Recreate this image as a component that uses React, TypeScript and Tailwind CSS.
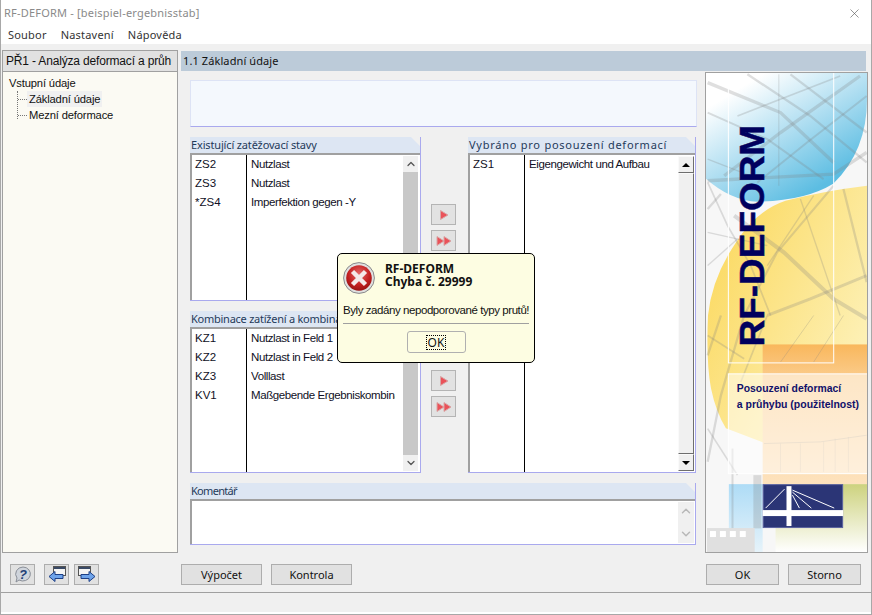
import { ChevronDown, ChevronUp, X } from "lucide-react";

type Row = { id: string; name: string };

const existing: Row[] = [
  { id: "ZS2", name: "Nutzlast" },
  { id: "ZS3", name: "Nutzlast" },
  { id: "*ZS4", name: "Imperfektion gegen -Y" },
];

const combos: Row[] = [
  { id: "KZ1", name: "Nutzlast in Feld 1" },
  { id: "KZ2", name: "Nutzlast in Feld 2" },
  { id: "KZ3", name: "Volllast" },
  { id: "KV1", name: "Maßgebende Ergebniskombination" },
];

const selected: Row[] = [{ id: "ZS1", name: "Eigengewicht und Aufbau" }];

// Group header with the cut corner
function GroupTitle({ title, spacing }: { title: string; spacing: string }) {
  return (
    <div
      className={`h-[16px] bg-[#dde6f3] pl-[1px] font-['Noto_Sans',sans-serif] text-[11px] leading-[16px] whitespace-nowrap text-[#1f3a5a] [clip-path:polygon(0_0,calc(100%-9px)_0,100%_9px,100%_100%,0_100%)] ${spacing}`}
    >
      {title}
    </div>
  );
}

function ListBox({
  title,
  spacing,
  rows,
  height,
  classic,
}: {
  title: string;
  spacing: string;
  rows: Row[];
  height: string;
  classic?: boolean;
}) {
  return (
    <div className="flex flex-col border-r border-b border-[#a9a9ee]">
      <GroupTitle title={title} spacing={spacing} />
      <div
        className={`flex ${height} border-t-2 border-l-2 border-[#a0a0a0] bg-white text-[11.5px] tracking-[-0.4px] text-[#101025]`}
      >
        <div className="w-[55px] shrink-0 border-r border-black pl-[3px] tracking-normal">
          {rows.map((r) => (
            <div key={r.id} className="h-[19px] leading-[19px]">
              {r.id}
            </div>
          ))}
        </div>
        <div className="min-w-0 flex-1 overflow-hidden pl-[4px]">
          {rows.map((r) => (
            <div key={r.id} className="h-[19px] overflow-hidden leading-[19px] whitespace-nowrap">
              {r.name}
            </div>
          ))}
        </div>
        {classic ? <ClassicScroll /> : <FlatScroll />}
      </div>
    </div>
  );
}

function FlatScroll() {
  return (
    <div className="my-[1px] mr-[2px] ml-[8px] flex w-[15px] shrink-0 flex-col bg-[#c8c8c8]">
      <div className="flex h-[16px] items-center justify-center bg-[#f0f0f0] text-[#555]">
        <ChevronUp size={12} strokeWidth={2.5} />
      </div>
      <div className="flex-1" />
      <div className="flex h-[16px] items-center justify-center bg-[#f0f0f0] text-[#555]">
        <ChevronDown size={12} strokeWidth={2.5} />
      </div>
    </div>
  );
}

function ClassicScroll() {
  const btn =
    "border border-[#fafafa] border-r-[#6e6e6e] border-b-[#6e6e6e] bg-[#f0f0f0]";
  return (
    <div className="my-[1px] mr-[1px] flex w-[16px] shrink-0 flex-col bg-[#f0f0f0]">
      <div className={`flex h-[17px] items-center justify-center ${btn}`}>
        <div className="h-0 w-0 border-x-[4px] border-b-[4px] border-x-transparent border-b-black" />
      </div>
      <div className={`flex-1 ${btn}`} />
      <div className={`flex h-[17px] items-center justify-center ${btn}`}>
        <div className="h-0 w-0 border-x-[4px] border-t-[4px] border-x-transparent border-t-black" />
      </div>
    </div>
  );
}

function ArrowBtn({ double }: { double?: boolean }) {
  return (
    <button className="flex h-[21px] w-[25px] items-center justify-center border border-[#b4b4b4] bg-[#e2e2e2]">
      <svg width="20" height="12" viewBox="0 0 20 12">
        {double ? (
          <>
            <path d="M3 1.5 L10 6 L3 10.5 Z" fill="#ea5259" stroke="#d9a6a6" />
            <path d="M10 1.5 L17 6 L10 10.5 Z" fill="#ea5259" stroke="#d9a6a6" />
          </>
        ) : (
          <path d="M6.5 1.5 L14 6 L6.5 10.5 Z" fill="#ea5259" stroke="#d9a6a6" />
        )}
      </svg>
    </button>
  );
}

function GrayBtn({ label, className }: { label: string; className: string }) {
  return (
    <button
      className={`h-[21px] border border-[#adadad] bg-[#e1e1e1] font-['Noto_Sans',sans-serif] text-[11px] leading-[19px] text-[#111] ${className}`}
    >
      {label}
    </button>
  );
}

function ToolBtn({ children, className }: { children: React.ReactNode; className?: string }) {
  return (
    <button
      className={`flex h-[21px] w-[25px] items-center justify-center border border-[#adadad] bg-[#e1e1e1] ${className ?? ""}`}
    >
      {children}
    </button>
  );
}

function NavIcon({ right }: { right?: boolean }) {
  return (
    <svg width="20" height="17" viewBox="0 0 20 17">
      <rect x={right ? 1.5 : 6.5} y="0.5" width="12" height="9" fill="#f4f4f4" stroke="#555" />
      <rect x={right ? 2 : 7} y="1" width="11" height="2" fill="#3a4a66" />
      {right ? (
        <path d="M4 8.5 H12 V5.5 L18 10.5 L12 15.5 V12.5 H4 Z" fill="#6ea3ea" stroke="#1d3f86" />
      ) : (
        <path d="M16 8.5 H8 V5.5 L2 10.5 L8 15.5 V12.5 H16 Z" fill="#6ea3ea" stroke="#1d3f86" />
      )}
    </svg>
  );
}

// The picture at the right of the window, origin at its top left corner
function SidePicture() {
  return (
    <svg
      className="block h-full w-full"
      viewBox="0 0 162 480"
      preserveAspectRatio="none"
      fontFamily="'Liberation Sans', sans-serif"
    >
      <defs>
        <linearGradient id="blue" x1="0.1" y1="0" x2="0.75" y2="0.85">
          <stop offset="0.15" stopColor="#ffffff" />
          <stop offset="0.55" stopColor="#b4e0f2" />
          <stop offset="1" stopColor="#5cbde2" />
        </linearGradient>
        <linearGradient id="yellow" x1="0.1" y1="0.1" x2="0.9" y2="0.7">
          <stop offset="0" stopColor="#fbd960" />
          <stop offset="1" stopColor="#fdf0b4" />
        </linearGradient>
        <linearGradient id="orange" x1="0" y1="0" x2="0" y2="1">
          <stop offset="0" stopColor="#f9b75c" />
          <stop offset="0.25" stopColor="#fbcd8e" />
          <stop offset="1" stopColor="#fde2bd" />
        </linearGradient>
        <linearGradient id="green" x1="0" y1="0" x2="0" y2="1">
          <stop offset="0" stopColor="#cdd27e" />
          <stop offset="1" stopColor="#ffffff" />
        </linearGradient>
        <linearGradient id="sky" x1="0" y1="0" x2="0" y2="1">
          <stop offset="0" stopColor="#aedcf6" />
          <stop offset="1" stopColor="#e6f3fa" />
        </linearGradient>
      </defs>
      <rect width="162" height="480" fill="#f7f7f7" />
      <path d="M0 106 Q25 128 52 129 Q100 128 128 111 Q162 78 162 26 L162 0 L0 0 Z" fill="url(#blue)" />
      <path
        d="M162 113 Q120 118 80 128 Q50 138 30 170 Q6 205 2 243 Q0 290 5 316 Q10 340 20 356 L57 370 L162 370 Z"
        fill="url(#yellow)"
      />
      <rect x="57" y="272" width="105" height="140" fill="url(#orange)" />
      <rect x="70" y="412" width="92" height="68" fill="url(#green)" />
      <rect x="23" y="412" width="34" height="68" fill="url(#sky)" />

      {/* roof structure, upper part */}
      <g transform="translate(-5 -7) scale(0.3333)" stroke="#7f7f7f" strokeOpacity="0.25" fill="none">
        <path d="M20 50 L240 140 L400 290" strokeWidth="10" />
        <path d="M140 25 L330 150 L500 290" strokeWidth="7" />
        <path d="M270 25 L500 200" strokeWidth="7" />
        <path d="M20 140 L200 220 L370 340" strokeWidth="6" />
        <path d="M20 280 L150 330" strokeWidth="4" />
        <path d="M480 30 L240 200 L70 330" strokeWidth="10" />
        <path d="M420 30 L110 150" strokeWidth="5" />
        <path d="M500 90 L320 230 L170 350" strokeWidth="6" />
        <path d="M20 345 L400 325 L500 260" strokeWidth="10" />
        <path d="M235 25 L235 360" strokeWidth="3" />
        <path d="M20 350 L80 480 L150 600 L210 750" strokeWidth="5" />
        <path d="M100 450 L250 560 L400 700 L500 760" strokeWidth="12" />
        <path d="M20 500 L200 540" strokeWidth="4" />
        <path d="M400 360 L230 560 L130 750" strokeWidth="6" />
        <path d="M340 390 L200 600" strokeWidth="4" />
        <path d="M430 370 L500 650" strokeWidth="7" />
        <path d="M500 630 L330 700 L200 750" strokeWidth="9" />
        <path d="M20 430 L60 385" strokeWidth="7" />
        <path d="M300 400 L420 750" strokeWidth="4" />
        <path d="M20 600 L110 520" strokeWidth="4" />
      </g>
      {/* roof structure, lower part */}
      <g transform="translate(-5 243) scale(0.3333)" stroke="#7f7f7f" strokeOpacity="0.25" fill="none">
        <path d="M60 0 L20 120" strokeWidth="7" />
        <path d="M130 0 L60 240 L20 440" strokeWidth="7" />
        <path d="M200 0 L120 200" strokeWidth="5" />
        <path d="M20 60 L130 130" strokeWidth="5" />
        <path d="M340 0 L240 140 M430 0 L340 140" strokeWidth="3" />
        <path d="M20 340 L110 480" strokeWidth="5" />
        <path d="M95 400 L95 650" strokeWidth="6" />
        <path d="M170 480 L170 640" strokeWidth="24" />
        <path d="M360 380 L500 360 M190 385 L360 380" strokeWidth="3" />
        <path d="M370 380 L370 470 M405 370 L405 470 M445 365 L445 470 M300 385 L300 470 M240 385 L240 470" strokeWidth="2" />
      </g>
      <rect x="1" y="456" width="48" height="24" fill="#e0e0e0" />
      <g fill="#ffffff">
        <rect x="4" y="459" width="6" height="6" />
        <rect x="14" y="459" width="6" height="6" />
        <rect x="24" y="459" width="6" height="6" />
        <rect x="34" y="459" width="6" height="6" />
      </g>

      {/* white frames */}
      <rect x="22.5" y="-2" width="106" height="292.5" fill="none" stroke="#fff" strokeWidth="1" />
      <rect x="22.5" y="301.5" width="150" height="100" fill="#fff" fillOpacity="0.5" stroke="#fff" strokeWidth="1" />

      <text
        transform="translate(58 274) rotate(-90)"
        fontSize="36"
        fontWeight="700"
        fill="#00005e"
        stroke="#00005e"
        strokeWidth="0.5"
        textLength="222"
        lengthAdjust="spacingAndGlyphs"
      >
        RF-DEFORM
      </text>
      <text x="31" y="320" fontSize="11" fontWeight="700" fill="#10106a" textLength="105" lengthAdjust="spacingAndGlyphs">
        Posouzení deformací
      </text>
      <text x="31" y="336" fontSize="11" fontWeight="700" fill="#10106a" textLength="123" lengthAdjust="spacingAndGlyphs">
        a průhybu (použitelnost)
      </text>

      {/* logo */}
      <rect x="57.5" y="412.5" width="80" height="43" fill="#2b3576" stroke="#5a62a0" />
      <rect x="81" y="414" width="5" height="40" fill="#fff" />
      <rect x="57" y="438" width="81" height="6" fill="#fff" />
      <path
        d="M60 436 L79 417 M87 418 L129 436 M87 420 L106 436 M87 423 L94 436"
        stroke="#fff"
        strokeWidth="1"
        fill="none"
      />
    </svg>
  );
}

function ErrorIcon() {
  return (
    <svg width="32" height="32" viewBox="0 0 32 32">
      <defs>
        <radialGradient id="err" cx="0.5" cy="0.35" r="0.7">
          <stop offset="0" stopColor="#e66a6a" />
          <stop offset="0.6" stopColor="#c32020" />
          <stop offset="1" stopColor="#8f1010" />
        </radialGradient>
      </defs>
      <circle cx="16" cy="16" r="15.4" fill="#e0e0e0" stroke="#8a8a8a" />
      <circle cx="16" cy="16" r="12.8" fill="url(#err)" />
      <path d="M9.5 9.5 L22.5 22.5 M22.5 9.5 L9.5 22.5" stroke="#f4eaea" strokeWidth="4.5" />
    </svg>
  );
}

function ErrorDialog() {
  return (
    <div className="absolute top-[253px] left-[336px] flex h-[110px] w-[198px] flex-col rounded-[5px] border border-black bg-[#fdfde2] px-[5px] text-[11.5px] text-[#111]">
      <div className="flex h-[43px] items-start pt-[8px]">
        <ErrorIcon />
        <div className="ml-[10px] font-['Noto_Sans',sans-serif] text-[12px] leading-[13px] font-bold">
          <div>RF-DEFORM</div>
          <div>Chyba č. 29999</div>
        </div>
      </div>
      <div className="mt-[5px] leading-[16px] tracking-[-0.43px] whitespace-nowrap">
        Byly zadány nepodporované typy prutů!
      </div>
      <div className="mt-[5px] border-t border-[#a0a0a0]" />
      <div className="flex justify-center pt-[7px]">
        <button className="flex h-[22px] w-[59px] items-center justify-center rounded-[3px] border border-[#b0b0b0]">
          <span className="border border-dotted border-black px-[1px] font-['Noto_Sans',sans-serif] text-[12px] leading-[13px]">
            OK
          </span>
        </button>
      </div>
    </div>
  );
}

export default function App() {
  return (
    <div className="relative flex h-[615px] w-[872px] flex-col overflow-hidden border-x border-b border-[#a8a8a8] bg-[#f0f0f0] font-['Liberation_Sans',sans-serif] text-[12px]">
      {/* title bar */}
      <div className="flex h-[26px] shrink-0 items-center justify-between bg-white pr-[9px] pl-[3px] font-['Noto_Sans',sans-serif] text-[11px] tracking-[0.2px] text-[#8a8a8a]">
        <span>RF-DEFORM - [beispiel-ergebnisstab]</span>
        <X size={15} strokeWidth={1} className="text-[#555]" />
      </div>
      {/* menu */}
      <div className="flex h-[18px] shrink-0 items-center gap-[14px] bg-white pt-[1px] pl-[7px] font-['Noto_Sans',sans-serif] text-[11px] tracking-[0.2px] text-[#333]">
        <span>Soubor</span>
        <span>Nastavení</span>
        <span>Nápověda</span>
      </div>

      <div className="flex min-h-0 flex-1 pt-[6px] pr-[3px] pl-[1px]">
        {/* navigator */}
        <div className="flex w-[176px] shrink-0 flex-col border border-[#a0a0a0]">
          <div className="flex h-[21px] shrink-0 items-center justify-between border-b border-[#a0a0a0] bg-[#e1e1e1] pr-[5px] pl-[3px] tracking-[-0.17px] whitespace-nowrap text-[#111]">
            <span>PŘ1 - Analýza deformací a průh</span>
            <ChevronDown size={12} className="text-[#555]" />
          </div>
          <div className="flex-1 bg-[#fbfaf3] pt-[3px] text-[11.2px] tracking-[-0.15px] text-[#111]">
            <div className="h-[16px] pl-[6px] leading-[16px]">Vstupní údaje</div>
            <div className="relative ml-[14px] h-[28px] border-l border-dotted border-[#777] pl-[9px]">
              <div className="absolute top-[8px] left-0 w-[9px] border-t border-dotted border-[#777]" />
              <div className="absolute top-[24px] left-0 w-[9px] border-t border-dotted border-[#777]" />
              <div className="h-[16px] w-fit bg-[#f0f0f0] px-[2px] leading-[16px]">Základní údaje</div>
              <div className="h-[16px] px-[2px] leading-[16px]">Mezní deformace</div>
            </div>
          </div>
        </div>

        {/* main */}
        <div className="mt-[1px] ml-[3px] flex min-w-0 flex-1 flex-col">
          <div className="mr-[2px] h-[20px] shrink-0 bg-[#bccbd9] pl-[2px] font-['Noto_Sans',sans-serif] text-[11px] leading-[20px] tracking-[0.1px] text-[#111]">
            1.1 Základní údaje
          </div>
          <div className="flex min-h-0 flex-1">
            <div className="w-[524px] shrink-0 pt-[9px] pl-[9px]">
              <div className="h-[47px] w-[507px] border border-[#dde3f5] border-b-[#a9a9ee] bg-[#f4f8fd]" />
              <div className="mt-[10px] grid w-[506px] grid-cols-[231px_47px_228px]">
                <ListBox
                  title="Existující zatěžovací stavy"
                  spacing="tracking-[-0.15px]"
                  rows={existing}
                  height="h-[147px]"
                />
                <div className="flex flex-col items-start gap-[5px] pt-[67px] pl-[10px]">
                  <ArrowBtn />
                  <ArrowBtn double />
                </div>
                <div className="row-span-2">
                  <ListBox
                    title="Vybráno pro posouzení deformací"
                    spacing="tracking-[0.75px]"
                    rows={selected}
                    height="h-[319px]"
                    classic
                  />
                </div>
                <div className="mt-[10px]">
                  <ListBox
                    title="Kombinace zatížení a kombinace výsledků"
                    spacing="tracking-[-0.25px]"
                    rows={combos}
                    height="h-[145px]"
                  />
                </div>
                <div className="flex flex-col items-start gap-[5px] pt-[69px] pl-[10px]">
                  <ArrowBtn />
                  <ArrowBtn double />
                </div>
              </div>
              <div className="mt-[10px] w-[506px] border-r border-b border-[#a9a9ee]">
                <GroupTitle title="Komentář" spacing="tracking-[-0.7px]" />
                <div className="flex h-[45px] border-t-2 border-l-2 border-[#a0a0a0] bg-white">
                  <div className="flex-1" />
                  <div className="my-[1px] mr-[1px] flex w-[16px] flex-col justify-between bg-[#f0f0f0] py-[2px] text-[#b8b8b8]">
                    <ChevronUp size={14} strokeWidth={2.5} className="ml-[1px]" />
                    <ChevronDown size={14} strokeWidth={2.5} className="ml-[1px]" />
                  </div>
                </div>
              </div>
            </div>
            <div className="mt-[1px] w-[163px] shrink-0 border border-[#a0a0a0]">
              <SidePicture />
            </div>
          </div>
        </div>
      </div>

      {/* buttons */}
      <div className="flex h-[39px] shrink-0 items-start pt-[11px] pl-[9px]">
        <ToolBtn>
          <svg width="20" height="17" viewBox="0 0 20 17">
            <path d="M10 1 A7.5 7 0 1 1 6 14 L3 16 L4 12 A7.5 7 0 0 1 10 1 Z" fill="#cfd4dc" stroke="#8a8f98" />
            <text x="10" y="12.5" textAnchor="middle" fontSize="13" fontWeight="700" fontStyle="italic" fill="#1f3f77">
              ?
            </text>
          </svg>
        </ToolBtn>
        <ToolBtn className="ml-[9px]">
          <NavIcon />
        </ToolBtn>
        <ToolBtn className="ml-[5px]">
          <NavIcon right />
        </ToolBtn>
        <GrayBtn label="Výpočet" className="ml-[82px] w-[81px]" />
        <GrayBtn label="Kontrola" className="ml-[9px] w-[81px]" />
        <GrayBtn label="OK" className="ml-[354px] w-[73px]" />
        <GrayBtn label="Storno" className="ml-[9px] w-[73px]" />
      </div>
      {/* status bar */}
      <div className="h-[22px] shrink-0 border-t border-b-2 border-t-[#a0a0a0] border-b-white bg-[#f0f0f0]" />

      <ErrorDialog />
    </div>
  );
}
